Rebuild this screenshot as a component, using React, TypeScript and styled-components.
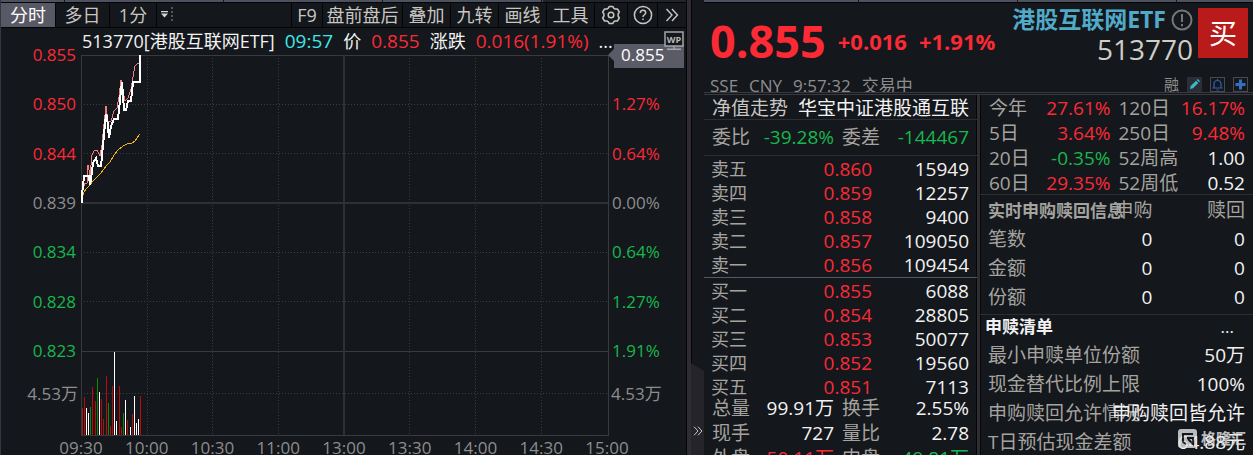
import React from 'react';
import styled, { createGlobalStyle } from 'styled-components';

const red = '#fb2a35';
const green = '#17b84c';
const label = '#a5a39f';
const dim = '#8d8d8d';
const white = '#f2f2f2';
const line = '#2d2e33';

const GlobalStyle = createGlobalStyle`
  *, *::before, *::after { box-sizing: border-box; }
  body {
    margin: 0;
    height: 100vh;
    overflow: hidden;
    background: #14171c;
    color: ${white};
    font-family: "Open Sans", "Noto Sans CJK SC", sans-serif;
    font-size: 18px;
    line-height: 24px;
  }
  h1, h2, p, dl, dt, dd { margin: 0; font-weight: inherit; font-size: inherit; }
  #root { height: 100%; }
`;

const PlainButton = styled.button`
  font: inherit;
  color: inherit;
  background: none;
  border: 0;
  padding: 0;
  margin: 0;
`;

const Screen = styled.div`
  display: flex;
  height: 100%;
`;

const TabEdge = styled.div<{ $offset: number; $end: number }>`
  flex: none;
  height: 3px;
  border-bottom: 1px solid #050506;
  background: linear-gradient(#4c525f, #4c525f) 0 0 / ${p => p.$end}% 100% no-repeat, #23232b;
  display: flex;
  &::before {
    content: '';
    flex: 1;
    background: repeating-linear-gradient(90deg, transparent 0 158px, #14171c 158px 159px);
    background-position: ${p => p.$offset}px 0;
  }
`;

const ChartPane = styled.main`
  flex: 1;
  min-width: 0;
  display: flex;
  flex-direction: column;
  border-left: 1px solid #34373f;
`;

const Toolbar = styled.nav`
  flex: none;
  display: flex;
  height: 25px;
  border-bottom: 1px solid #050506;
  color: #c9c6c1;
`;

const Tool = styled(PlainButton)<{ $w: number; $active?: boolean }>`
  flex: none;
  display: flex;
  align-items: center;
  justify-content: center;
  width: ${p => p.$w}px;
  border-right: 1px solid #050506;
  white-space: nowrap;
  background: ${p => (p.$active ? '#595965' : 'transparent')};
  color: ${p => (p.$active ? '#ffffff' : 'inherit')};
`;

const ToolGap = styled.div`
  flex: 1;
  display: flex;
  align-items: center;
  padding-left: 3px;
  border-right: 1px solid #050506;
`;

const Headline = styled.div`
  flex: none;
  display: flex;
  align-items: center;
  height: 27px;
  padding: 0 3px 2px 81px;
  white-space: nowrap;
  svg { position: relative; z-index: 1; }
`;

const Name = styled.h1`
  margin-right: 10px;
`;

const Reading = styled.span<{ $color?: string }>`
  color: ${p => p.$color || 'inherit'};
  font-size: ${p => (p.$color ? 19 : 18)}px;
  margin-right: 10px;
`;

const Spring = styled.span`
  flex: 1;
`;

const ChartBody = styled.div`
  flex: none;
  display: grid;
  grid-template-columns: 80px minmax(0, 1fr) 78px;
  font-size: 17px;
  line-height: 18px;
`;

const Axis = styled.div<{ $right?: boolean }>`
  display: flex;
  flex-direction: column;
  justify-content: space-between;
  height: 314px;
  margin-top: -9px;
  padding: ${p => (p.$right ? '0 0 0 3px' : '0 5px 0 0')};
  text-align: ${p => (p.$right ? 'left' : 'right')};
`;

const AxisColumn = styled.div`
  display: flex;
  flex-direction: column;
  gap: 25px;
`;

const AxisValue = styled.span<{ $color: string }>`
  color: ${p => p.$color};
`;

const VolumeValue = styled.span<{ $right?: boolean }>`
  color: ${dim};
  text-align: ${p => (p.$right ? 'left' : 'right')};
  padding: ${p => (p.$right ? '0 0 0 2px' : '0 3px 0 0')};
  white-space: nowrap;
`;

const PriceFlag = styled.span`
  position: relative;
  display: block;
  height: 24px;
  margin: -2px 3px -4px 2px;
  padding-left: 7px;
  background: #5b5b68;
  color: #ffffff;
  line-height: 22px;
  &::before {
    content: '';
    position: absolute;
    left: -6px;
    top: 5px;
    border: 6px solid transparent;
    border-left: 0;
    border-right-color: #5b5b68;
  }
`;

const Plot = styled.svg`
  display: block;
  width: 100%;
  height: 381px;
`;

const TimeAxis = styled.div`
  flex: none;
  display: flex;
  justify-content: space-between;
  margin: 2px 57px 0 57px;
  color: ${dim};
  font-size: 17px;
  line-height: 20px;
  span { width: 46px; text-align: center; }
`;

const Gutter = styled.div`
  flex: none;
  width: 17px;
  display: flex;
  flex-direction: column;
  justify-content: flex-end;
  border-left: 4px solid #2f2d33;
  box-shadow: inset 1px 0 #050506, -1px 0 #050506;
`;

const Collapse = styled(PlainButton)`
  height: 92px;
  padding-top: 44px;
  background: #26242b;
  clip-path: polygon(0 0, 100% 8px, 100% 100%, 0 100%);
  color: #c9c6c1;
  svg { display: block; margin: 0 auto; }
`;

const QuotePane = styled.aside`
  flex: none;
  width: 549px;
  display: flex;
  flex-direction: column;
`;

const QuoteHead = styled.header`
  flex: none;
  display: flex;
  justify-content: space-between;
  height: 89px;
  overflow: hidden;
  padding: 5px 5px 0 6px;
  white-space: nowrap;
`;

const PriceLine = styled.div`
  display: flex;
  align-items: center;
  gap: 12px;
  height: 66px;
  color: ${red};
  font-weight: 700;
  font-size: 22px;
  line-height: 70px;
`;

const BigPrice = styled.strong`
  font-size: 45px;
  font-weight: 700;
`;

const Session = styled.p`
  display: flex;
  gap: 11px;
  color: ${dim};
  font-size: 17px;
  line-height: 24px;
`;

const Identity = styled.div`
  display: grid;
  grid-template-columns: auto 50px;
  column-gap: 5px;
  align-content: start;
`;

const Titles = styled.div`
  display: flex;
  flex-direction: column;
  align-items: flex-end;
`;

const FundName = styled.h2`
  display: flex;
  align-items: center;
  gap: 5px;
  color: #50aac8;
  font-size: 23px;
  font-weight: 700;
  line-height: 23px;
  height: 23px;
`;

const Code = styled.span`
  color: #d0ccc6;
  font-size: 28px;
  line-height: 36px;
`;

const Buy = styled(PlainButton)`
  height: 50px;
  background: #b91a1a;
  color: #ffffff;
  font-size: 28px;
  line-height: 50px;
`;

const Badges = styled.div`
  grid-column: 1 / -1;
  display: flex;
  justify-content: flex-end;
  align-items: center;
  gap: 8px;
  margin-top: 9px;
  height: 16px;
  color: ${dim};
  font-size: 15px;
  line-height: 16px;
`;

const BadgeButton = styled(PlainButton)<{ $filled?: boolean }>`
  display: grid;
  place-items: center;
  width: 15px;
  height: 15px;
  border: 1px solid ${p => (p.$filled ? '#2c2d37' : '#4a4a4e')};
  background: ${p => (p.$filled ? '#2c2d37' : 'transparent')};
`;

const Columns = styled.div`
  flex: 1;
  min-height: 0;
  display: grid;
  grid-template-columns: minmax(0, 276fr) minmax(0, 273fr);
  border-top: 3px double #3a393f;
  overflow: hidden;
`;

const Column = styled.section<{ $split?: boolean }>`
  border-right: ${p => (p.$split ? '3px solid #2f2d33' : '0')};
  box-shadow: ${p => (p.$split ? 'inset -1px 0 #050506' : 'inset 1px 0 #050506')};
  font-size: 19px;
  white-space: nowrap;
`;

const Pair = styled.div`
  display: flex;
  align-items: center;
  justify-content: space-between;
  height: 25px;
  padding: 1px 8px 0;
  border-bottom: 1px solid ${line};
  color: ${white};
`;

const Soft = styled.span`
  color: #c9c6c1;
`;

const Quad = styled.dl<{ $row: number; $gap: number; $pad: string; $ruled?: boolean }>`
  display: grid;
  grid-template-columns: 46px minmax(0, 76fr) 62px minmax(0, 73fr);
  grid-auto-rows: ${p => p.$row}px;
  row-gap: ${p => p.$gap}px;
  line-height: ${p => p.$row}px;
  padding: ${p => p.$pad};
  border-bottom: ${p => (p.$ruled ? `1px solid ${line}` : '0')};
  dt { color: ${label}; }
  dt:nth-of-type(even) { padding-left: 8px; }
  dd { display: flex; justify-content: flex-end; }
`;

const Value = styled.dd<{ $color?: string }>`
  color: ${p => p.$color || white};
`;

const Book = styled.table<{ $last?: boolean }>`
  width: 100%;
  margin-top: 1px;
  border-collapse: collapse;
  border-bottom: ${p => (p.$last ? '0' : '1px solid #555a62')};
  td, th { height: 24px; padding: 0; line-height: 24px; font-weight: 400; text-align: right; }
  th { padding-left: 7px; text-align: left; font-size: 18px; color: ${label}; }
  td:last-child { padding-right: 8px; width: 105px; }
`;

const BookPrice = styled.td`
  color: ${red};
`;

const Block = styled.div`
  padding: 1px 8px 2px 8px;
  border-bottom: 1px solid ${line};
`;

const Flow = styled.div`
  display: grid;
  grid-template-columns: 102px minmax(0, 62fr) minmax(0, 92fr);
  height: 29px;
  line-height: 29px;
  color: ${label};
  span { display: flex; justify-content: flex-end; }
`;

const FlowTitle = styled.strong`
  font-size: 17px;
`;

const Bright = styled.span`
  color: ${white};
`;

const ListHead = styled.div`
  display: flex;
  justify-content: space-between;
  height: 26px;
  padding: 0 19px 0 5px;
  font-size: 17px;
  line-height: 24px;
`;

const ListRow = styled.div`
  display: flex;
  justify-content: space-between;
  height: 29px;
  padding: 0 8px;
  line-height: 29px;
  color: ${label};
  dt { width: 0; }
`;

const Watermark = styled.div`
  position: absolute;
  right: 7px;
  bottom: 7px;
  display: flex;
  align-items: center;
  gap: 4px;
  color: #e4e4e4;
  opacity: 0.8;
  font-size: 15px;
  font-weight: 700;
  line-height: 20px;
`;

const prices: [string, string][] = [
  ['0.855', red], ['0.850', red], ['0.844', red], ['0.839', dim],
  ['0.834', green], ['0.828', green], ['0.823', green],
];
const percents: [string, string][] = [
  ['1.27%', red], ['0.64%', red], ['0.00%', dim],
  ['0.64%', green], ['1.27%', green], ['1.91%', green],
];
const times = ['09:30', '10:00', '10:30', '11:00', '13:00', '13:30', '14:00', '14:30', '15:00'];

const R = '#c00808', G = '#0a8a0a', W = '#ffffff';
const bars: [number, number, string][] = [
  [1, 27, R], [3, 38, R], [5, 27, W], [7, 22, W], [9, 28, G], [11, 48, R], [14, 34, R], [16, 57, G],
  [18, 43, W], [20, 36, R], [22, 16, R], [25, 59, R], [27, 32, G], [29, 9, R], [31, 49, R], [33, 83, W],
  [35, 14, W], [38, 49, R], [40, 8, R], [42, 22, G], [44, 35, W], [46, 15, R], [49, 8, W], [51, 21, R],
  [53, 39, W], [55, 12, W], [57, 16, W], [59, 39, R],
];

const sells = [['卖五', '0.860', '15949'], ['卖四', '0.859', '12257'], ['卖三', '0.858', '9400'], ['卖二', '0.857', '109050'], ['卖一', '0.856', '109454']];
const buys = [['买一', '0.855', '6088'], ['买二', '0.854', '28805'], ['买三', '0.853', '50077'], ['买四', '0.852', '19560'], ['买五', '0.851', '7113']];

type Cell = [string, string, string?];
const totals: Cell[] = [
  ['总量', '99.91万'], ['换手', '2.55%'], ['现手', '727'], ['量比', '2.78'],
  ['外盘', '50.11万', red], ['内盘', '49.81万', green],
];
const periods: Cell[] = [
  ['今年', '27.61%', red], ['120日', '16.17%', red], ['5日', '3.64%', red], ['250日', '9.48%', red],
  ['20日', '-0.35%', green], ['52周高', '1.00'], ['60日', '29.35%', red], ['52周低', '0.52'],
];
const listing = [['最小申赎单位份额', '50万'], ['现金替代比例上限', '100%'], ['申购赎回允许情况', '申购赎回皆允许'], ['T日预估现金差额', '64.88元']];

const Cells = ({ items }: { items: Cell[] }) => (
  <>
    {items.map(([k, v, c]) => (
      <React.Fragment key={k}>
        <dt>{k}</dt>
        <Value $color={c}>{v}</Value>
      </React.Fragment>
    ))}
  </>
);

const BookRows = ({ rows, last }: { rows: string[][]; last?: boolean }) => (
  <Book $last={last}>
    <tbody>
      {rows.map(([n, p, v]) => (
        <tr key={n}>
          <th scope="row">{n}</th>
          <BookPrice>{p}</BookPrice>
          <td>{v}</td>
        </tr>
      ))}
    </tbody>
  </Book>
);

const Chevrons = ({ size }: { size: number }) => (
  <svg width={size} height={size} viewBox="0 0 14 14" fill="none" stroke="currentColor" strokeWidth="1.4">
    <path d="M1.500 1 7 7l-5.500 6M7 1l5.500 6L7 13" />
  </svg>
);

const GearIcon = () => (
  <svg width="20" height="20" viewBox="0 0 20 20" fill="none" stroke="currentColor" strokeWidth="1.500" strokeLinejoin="round">
    <path d="M7.300 3.200 8.300 1.400h3.400l1 1.800 1.300.8h2.400l1.900 3-1.200 2v2l1.200 2-1.900 3H14l-1.300.8-1 1.800H8.300l-1-1.800L6 16H3.600l-1.900-3 1.200-2V9L1.700 7l1.900-3H6z" />
    <circle cx="10" cy="10" r="2.800" />
  </svg>
);

const HelpIcon = () => (
  <svg width="20" height="20" viewBox="0 0 20 20" fill="none" stroke="currentColor" strokeWidth="1.500">
    <circle cx="10" cy="10" r="8.600" />
    <path d="M7.300 8c0-1.800 1.200-2.800 2.700-2.800s2.700 1 2.700 2.500c0 2-2.700 2.100-2.700 4.200M10 13.400v1.700" />
  </svg>
);

const MenuIcon = () => (
  <svg width="14" height="20" viewBox="0 0 14 20" fill="#d8d8d8">
    <path d="M1 6h7v1.200H1zM1 8.500h7L4.500 12.500z" />
    <path fill="#55555b" d="M11 2h2v2h-2zM11 6h2v2h-2zM11 10h2v2h-2zM11 14h2v2h-2z" />
  </svg>
);

const ScreenIcon = () => (
  <svg width="20" height="20" viewBox="0 0 20 20" fill="none" stroke="#a5a5a5" strokeWidth="1.500">
    <path fill="#14171c" d="M1 1h18v14H1z" />
    <path d="M10 15v3M3 18.200h14" />
    <text x="10" y="12" textAnchor="middle" fontSize="9" fontWeight="700" fill="#b8b8b8" stroke="none">WP</text>
  </svg>
);

const InfoIcon = () => (
  <svg width="22" height="22" viewBox="0 0 22 22" fill="none" stroke="#77777a" strokeWidth="2">
    <circle cx="11" cy="11" r="9.500" />
    <path d="M11 5v8M11 15v2.200" />
  </svg>
);

export default function App() {
  const gridX = [66, 131, 197, 328, 394, 460];
  return (
    <>
      <GlobalStyle />
      <Screen>
        <ChartPane>
          <TabEdge $offset={-95} $end={79} />
          <Toolbar>
            <Tool $w={55} $active>分时</Tool>
            <Tool $w={54}>多日</Tool>
            <Tool $w={47}>1分</Tool>
            <ToolGap><MenuIcon /></ToolGap>
            <Tool $w={31}>F9</Tool>
            <Tool $w={80}>盘前盘后</Tool>
            <Tool $w={48}>叠加</Tool>
            <Tool $w={48}>九转</Tool>
            <Tool $w={48}>画线</Tool>
            <Tool $w={48}>工具</Tool>
            <Tool $w={33} aria-label="设置"><GearIcon /></Tool>
            <Tool $w={30} aria-label="帮助"><HelpIcon /></Tool>
            <Tool $w={29} aria-label="更多"><Chevrons size={14} /></Tool>
          </Toolbar>
          <Headline>
            <Name>513770[港股互联网ETF]</Name>
            <Reading $color="#3fe6ea">09:57</Reading>
            <Reading>价</Reading>
            <Reading $color={red}>0.855</Reading>
            <Reading>涨跌</Reading>
            <Reading $color={red}>0.016(1.91%)</Reading>
            <span>...</span>
            <Spring />
            <ScreenIcon />
          </Headline>
          <ChartBody>
            <AxisColumn>
              <Axis>
                {prices.map(([t, c]) => <AxisValue key={t} $color={c}>{t}</AxisValue>)}
              </Axis>
              <VolumeValue>4.53万</VolumeValue>
            </AxisColumn>
            <Plot viewBox="0 0 528 381" preserveAspectRatio="none" fill="none" shapeRendering="crispEdges">
              <g stroke="#3c3d42" strokeDasharray="1 2">
                {gridX.map(x => <path key={x} d={`M${x + 0.5} 0V380`} />)}
                {[49, 98, 197, 246, 338].map(y => <path key={y} d={`M0 ${y + 0.5}H527`} />)}
              </g>
              <g stroke="#3a393e">
                <path d="M.5 0V380.500H527.500V.500H0M0 296.500H527" />
                <path stroke="#302f34" strokeWidth="2" d="M0 148H527M263 0V380" />
              </g>
              {bars.map(([x, h, c]) => <path key={x} stroke={c} d={`M${x + 0.5} 380V${380 - h}`} />)}
              <path stroke="#f2b01e" d="M1 143 3 137 5 134 8 131 12 126 16 122 20 118 23 114 25 111 29 107 33 100 37 95 42 91 46 89 51 88 54 86 56 83 59 79" />
              <path stroke="#f07f82" d="M2 134 4 128 6 128 7 110 9 120 11 100 13 96 16 95 19 101 21 90 23 69 25 51 27 67 30 66 33 56 36 53 38 42 40 25 42 36 44 46 47 43 50 34 52 22 54 11 57 8 59 8" />
              <path stroke="#ffffff" strokeWidth="2" d="M0 147H1V140L3 121H8L9 130 11 117 12 108 15 103 17 111H20L22 90 25 59 26 62 28 83 30 71 33 64H37L39 45 41 27 43 55H45L47 46H50L52 27H59V0" />
            </Plot>
            <AxisColumn>
              <Axis $right>
                <PriceFlag>0.855</PriceFlag>
                {percents.map(([t, c], i) => <AxisValue key={i} $color={c}>{t}</AxisValue>)}
              </Axis>
              <VolumeValue $right>4.53万</VolumeValue>
            </AxisColumn>
          </ChartBody>
          <TimeAxis>
            {times.map(t => <span key={t}>{t}</span>)}
          </TimeAxis>
        </ChartPane>
        <Gutter>
          <Collapse aria-label="收起"><Chevrons size={10} /></Collapse>
        </Gutter>
        <QuotePane>
          <TabEdge $offset={-4} $end={100} />
          <QuoteHead>
            <div>
              <PriceLine>
                <BigPrice>0.855</BigPrice>
                <span>+0.016</span>
                <span>+1.91%</span>
              </PriceLine>
              <Session><span>SSE</span><span>CNY</span><span>9:57:32</span><span>交易中</span></Session>
            </div>
            <Identity>
              <Titles>
                <FundName>港股互联网ETF<InfoIcon /></FundName>
                <Code>513770</Code>
              </Titles>
              <Buy>买</Buy>
              <Badges>
                <span>融</span>
                <BadgeButton $filled aria-label="编辑">
                  <svg width="13" height="13" viewBox="0 0 13 13" fill="#35bccb"><path d="M2 11l.7-3L8 2.700l2.300 2.300L5 10.300zM8.700 2l1-1 2.300 2.300-1 1z" /></svg>
                </BadgeButton>
                <BadgeButton aria-label="提醒">
                  <svg width="13" height="13" viewBox="0 0 13 13" fill="none" stroke="#2f62b5" strokeWidth="1.200"><path d="M1.500 10h10M3 10V6a3.500 3.500 0 0 1 7 0v4M5.500 12h2M6.500 1v1.500" /></svg>
                </BadgeButton>
                <BadgeButton aria-label="添加">
                  <svg width="13" height="13" viewBox="0 0 13 13" fill="#3470c0"><path d="M5 1.500h3V5h3.500v3H8v3.500H5V8H1.500V5H5z" /></svg>
                </BadgeButton>
              </Badges>
            </Identity>
          </QuoteHead>
          <Columns>
            <Column $split>
              <Pair><Soft>净值走势</Soft><span>华宝中证港股通互联</span></Pair>
              <Quad $row={35} $gap={0} $pad="0 8px" $ruled>
                <Cells items={[['委比', '-39.28%', green], ['委差', '-144467', green]]} />
              </Quad>
              <BookRows rows={sells} />
              <BookRows rows={buys} last />
              <Quad $row={18} $gap={7} $pad="0 8px">
                <Cells items={totals} />
              </Quad>
            </Column>
            <Column>
              <Quad $row={22} $gap={3} $pad="2px 8px 0 9px" $ruled>
                <Cells items={periods} />
              </Quad>
              <Block>
                <Flow><FlowTitle>实时申购赎回信息</FlowTitle><span>申购</span><span>赎回</span></Flow>
                {['笔数', '金额', '份额'].map(n => (
                  <Flow key={n}><div>{n}</div><Bright>0</Bright><Bright>0</Bright></Flow>
                ))}
              </Block>
              <ListHead><strong>申赎清单</strong><span>...</span></ListHead>
              <dl>
                {listing.map(([k, v]) => (
                  <ListRow key={k}><dt>{k}</dt><Value>{v}</Value></ListRow>
                ))}
              </dl>
            </Column>
          </Columns>
        </QuotePane>
      </Screen>
      <Watermark>
        <svg width="19" height="19" viewBox="0 0 19 19">
          <path fill="#e4e4e4" d="M3 0h13a3 3 0 0 1 3 3v13a3 3 0 0 1-3 3H3a3 3 0 0 1-3-3V3a3 3 0 0 1 3-3z" />
          <path fill="none" stroke="#14171c" strokeWidth="2" d="M15 5H5v8l3 2M9 9h6v6l-5-5" />
        </svg>
        格隆汇
      </Watermark>
    </>
  );
}
